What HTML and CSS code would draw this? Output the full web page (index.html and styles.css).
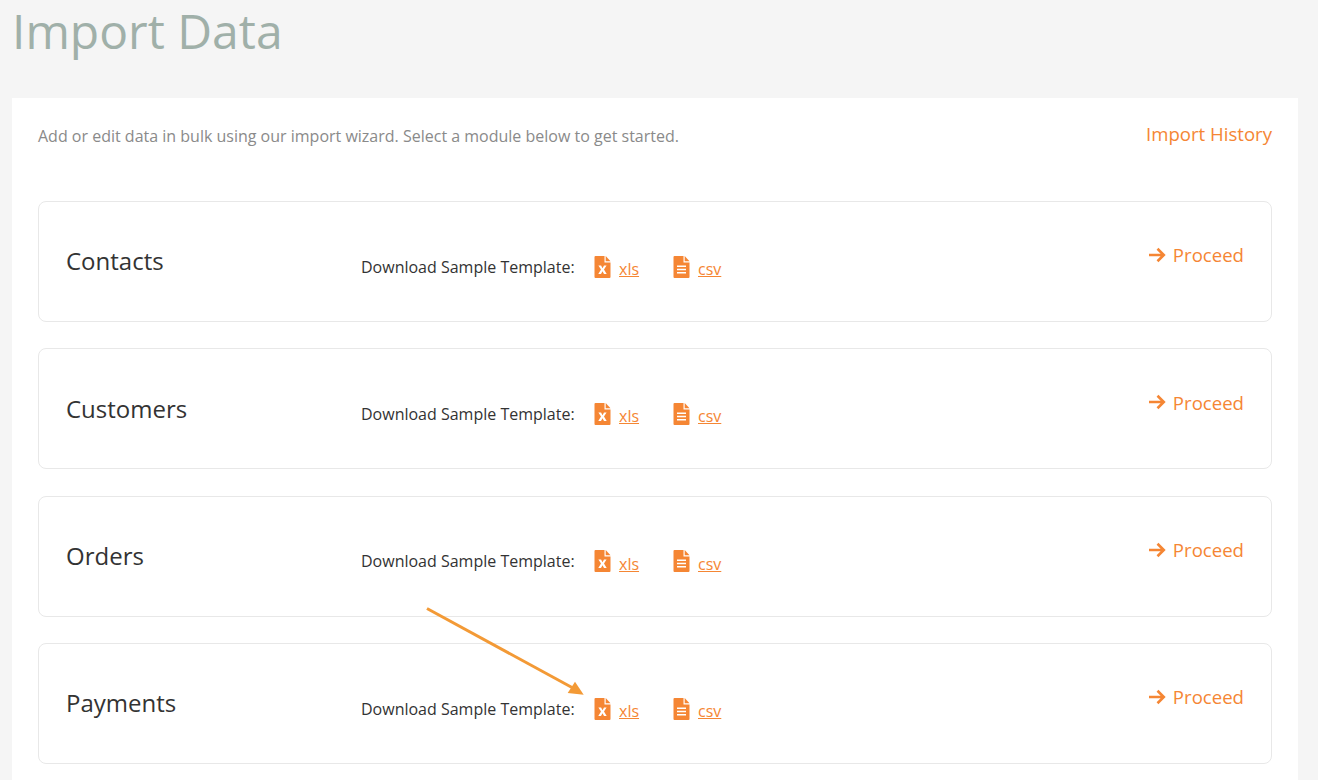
FILE: index.html
```html
<!DOCTYPE html>
<html>
<head>
  <title>Import Data</title>
  <link rel="stylesheet" href="styles.css">
</head>
<body>
  <svg width="0" height="0" class="defs">
    <symbol id="file-xls" viewBox="0 0 16 22">
      <path fill="#f58634" d="M1 0H10V6.5H16V21a1 1 0 0 1-1 1H1a1 1 0 0 1-1-1V1a1 1 0 0 1 1-1z"/>
      <path fill="#f58634" d="M11.2 0 16 5.2H11.2z"/>
      <path fill="#fff" d="M3.9 9.5H6.6L8 12.2 9.5 9.5H12.1L9.5 13.6 12.2 18H9.5L8 15.2 6.5 18H3.8L6.5 13.6z"/>
    </symbol>
    <symbol id="file-csv" viewBox="0 0 16 22">
      <path fill="#f58634" d="M1 0H10V6.5H16V21a1 1 0 0 1-1 1H1a1 1 0 0 1-1-1V1a1 1 0 0 1 1-1z"/>
      <path fill="#f58634" d="M11.2 0 16 5.2H11.2z"/>
      <path fill="#fff" d="M3.5 9.5H12.5V11H3.5zM3.5 12.7H12.5V14.2H3.5zM3.5 15.9H12.5V17.4H3.5z"/>
    </symbol>
    <symbol id="arrow-right" viewBox="0 0 18 16">
      <path fill="none" stroke="#f58634" stroke-width="2.6" d="M1 8H15.5M9.5 1.8 15.8 8 9.5 14.2"/>
    </symbol>
  </svg>

  <h1 class="page-title">Import Data</h1>

  <div class="panel">
    <div class="panel-head">
      <p class="intro">Add or edit data in bulk using our import wizard. Select a module below to get started.</p>
      <a class="history-link" href="#">Import History</a>
    </div>

    <div class="module">
      <div class="module-name">Contacts</div>
      <div class="templates">
        <span class="templates-label">Download Sample Template:</span>
        <a class="file-link xls" href="#"><svg class="file-icon"><use href="#file-xls"/></svg><span>xls</span></a>
        <a class="file-link" href="#"><svg class="file-icon"><use href="#file-csv"/></svg><span>csv</span></a>
      </div>
      <a class="proceed" href="#"><svg class="proceed-icon"><use href="#arrow-right"/></svg>Proceed</a>
    </div>

    <div class="module">
      <div class="module-name">Customers</div>
      <div class="templates">
        <span class="templates-label">Download Sample Template:</span>
        <a class="file-link xls" href="#"><svg class="file-icon"><use href="#file-xls"/></svg><span>xls</span></a>
        <a class="file-link" href="#"><svg class="file-icon"><use href="#file-csv"/></svg><span>csv</span></a>
      </div>
      <a class="proceed" href="#"><svg class="proceed-icon"><use href="#arrow-right"/></svg>Proceed</a>
    </div>

    <div class="module">
      <div class="module-name">Orders</div>
      <div class="templates">
        <span class="templates-label">Download Sample Template:</span>
        <a class="file-link xls" href="#"><svg class="file-icon"><use href="#file-xls"/></svg><span>xls</span></a>
        <a class="file-link" href="#"><svg class="file-icon"><use href="#file-csv"/></svg><span>csv</span></a>
      </div>
      <a class="proceed" href="#"><svg class="proceed-icon"><use href="#arrow-right"/></svg>Proceed</a>
    </div>

    <div class="module">
      <div class="module-name">Payments</div>
      <div class="templates">
        <span class="templates-label">Download Sample Template:</span>
        <a class="file-link xls" href="#"><svg class="file-icon"><use href="#file-xls"/></svg><span>xls</span></a>
        <a class="file-link" href="#"><svg class="file-icon"><use href="#file-csv"/></svg><span>csv</span></a>
      </div>
      <a class="proceed" href="#"><svg class="proceed-icon"><use href="#arrow-right"/></svg>Proceed</a>
    </div>
  </div>

  <!-- annotation drawn over the page -->
  <svg class="annotation" width="170" height="95" viewBox="0 0 170 95">
    <path fill="none" stroke="#f39a36" stroke-width="3" d="M1 1.500 146 80.500"/>
    <path fill="#f39a36" d="M157.700 87.700 141.700 86 149 74.700z"/>
  </svg>
</body>
</html>
```

FILE: styles.css
```css
body {
  margin: 0;
  padding: 0 20px 0 12px;
  height: 780px;
  overflow: hidden;
  box-sizing: border-box;
  font-family: "Open Sans", sans-serif;
  background-color: #f5f5f5;
  position: relative;
}

a {
  color: #f58634;
  text-decoration: none;
}

.defs {
  position: absolute;
}

.page-title {
  margin: 0;
  height: 98px;
  font-size: 48px;
  line-height: 62px;
  font-weight: 400;
  color: #a0b0a9;
}

.panel {
  background-color: #fff;
  padding: 0 26px;
  height: 700px;
}

.panel-head {
  display: flex;
  justify-content: space-between;
  height: 103px;
  padding-top: 24px;
  box-sizing: border-box;
}

.intro {
  margin: 0;
  padding-top: 2px;
  font-size: 16px;
  line-height: 24px;
  color: #8a8a8a;
}

.history-link {
  font-size: 18.6px;
  line-height: 23px;
}

.module {
  display: flex;
  align-items: center;
  height: 121px;
  margin-bottom: 26.4px;
  padding: 0 27px;
  box-sizing: border-box;
  border: 1px solid #e8e8e8;
  border-radius: 8px;
}

.module-name {
  width: 295px;
  padding-bottom: 1.6px;
  font-size: 24px;
  color: #333;
}

.templates {
  display: flex;
  align-items: center;
  padding-top: 10px;
  font-size: 16px;
  color: #333;
}

.templates-label {
  width: 233px;
}

.file-link {
  display: flex;
  align-items: center;
  gap: 8px;
  font-size: 16px;
}

.file-link span {
  text-decoration: underline;
  padding-top: 5px;
}

.file-link.xls {
  width: 79px;
}

.file-icon {
  width: 17px;
  height: 22px;
}

.proceed {
  display: flex;
  align-items: center;
  margin-left: auto;
  padding-bottom: 13.4px;
  font-size: 18.6px;
}

.proceed-icon {
  width: 18px;
  height: 16px;
  margin-right: 7px;
}

.annotation {
  position: absolute;
  left: 426px;
  top: 607px;
}
```
